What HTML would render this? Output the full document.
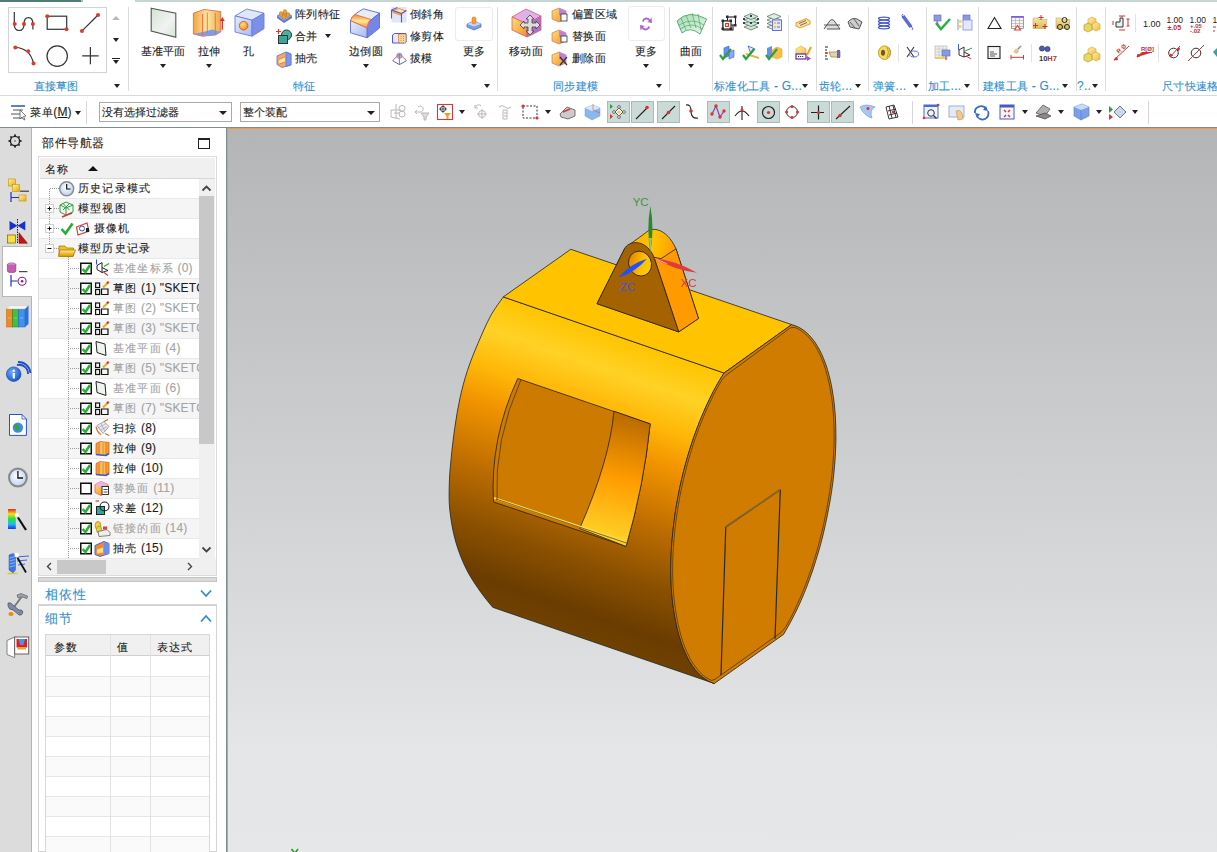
<!DOCTYPE html>
<html><head><meta charset="utf-8"><title>NX</title>
<style>
*{margin:0;padding:0;box-sizing:border-box}
html,body{width:1217px;height:852px;overflow:hidden;background:#fff;font-family:"Liberation Sans",sans-serif;font-size:12px;color:#1b1b1b}
.a{position:absolute}
.t{position:absolute;white-space:nowrap;line-height:14px;font-size:11px;letter-spacing:1.2px;-webkit-text-stroke:0.1px currentColor}
.c{transform:translateX(-50%)}
.lbl{color:#2e8fd0}
.g{color:#a3a3a3}
.l{font-size:12px;letter-spacing:0.2px}
</style></head><body>
<div class="a" style="left:0px;top:0px;width:81px;height:2px;background:#4f7d78"></div>
<div class="a" style="left:81px;top:0px;width:2px;height:2px;background:#a9c0bd"></div>
<div class="a" style="left:135px;top:0px;width:1082px;height:2px;background:#c5d5d3"></div>
<div class="a" style="left:0px;top:95px;width:1217px;height:1px;background:#d9d9d9"></div>
<div class="a" style="left:0px;top:127px;width:1217px;height:1px;background:#7f8b90"></div>
<div class="a" style="left:0px;top:128px;width:31px;height:724px;background:#dcdcdc"></div>
<div class="a" style="left:31px;top:128px;width:1px;height:724px;background:#b4b4b4"></div>
<div class="a" style="left:226px;top:128px;width:1px;height:724px;background:#7f8b90"></div>
<div class="a" style="left:227px;top:128px;width:990px;height:724px;background:#f39a3c"></div>
<div class="a" style="left:228px;top:129px;width:989px;height:723px;background:linear-gradient(#b4b5b7,#e5e6e8 87%,#e6e7e9)"></div>
<div class="a" style="left:8px;top:7px;width:99px;height:66px;border:1px solid #d3d3d3"></div>
<div class="a" style="left:112.0px;top:16.0px;width:0;height:0;border-left:4.0px solid transparent;border-right:4.0px solid transparent;border-top:4px solid transparent"></div>
<div class="a" style="left:112px;top:16px;width:0;height:0;border-left:4px solid transparent;border-right:4px solid transparent;border-bottom:4px solid #b9b9b9"></div>
<div class="a" style="left:112.5px;top:37.5px;width:0;height:0;border-left:3.5px solid transparent;border-right:3.5px solid transparent;border-top:4px solid #222"></div>
<div class="a" style="left:112px;top:58px;width:8px;height:1px;background:#222"></div>
<div class="a" style="left:112.5px;top:60.0px;width:0;height:0;border-left:3.5px solid transparent;border-right:3.5px solid transparent;border-top:4px solid #222"></div>
<div class="t c lbl" style="left:56.15px;top:79px;letter-spacing:0.3px;">直接草图</div>
<div class="a" style="left:114.0px;top:83.5px;width:0;height:0;border-left:3.5px solid transparent;border-right:3.5px solid transparent;border-top:4px solid #222"></div>
<div class="a" style="left:128px;top:7px;width:1px;height:84px;background:#dcdcdc"></div>
<div class="t c " style="left:163.15px;top:44px;letter-spacing:0.3px;">基准平面</div>
<div class="a" style="left:160.0px;top:63.5px;width:0;height:0;border-left:3.5px solid transparent;border-right:3.5px solid transparent;border-top:4px solid #222"></div>
<div class="t c " style="left:209.15px;top:44px;letter-spacing:0.3px;">拉伸</div>
<div class="a" style="left:206.0px;top:63.5px;width:0;height:0;border-left:3.5px solid transparent;border-right:3.5px solid transparent;border-top:4px solid #222"></div>
<div class="t c " style="left:249.15px;top:44px;letter-spacing:0.3px;">孔</div>
<div class="t " style="left:295px;top:7px;letter-spacing:0.3px;">阵列特征</div>
<div class="t " style="left:295px;top:29px;letter-spacing:0.3px;">合并</div>
<div class="a" style="left:325.0px;top:34.0px;width:0;height:0;border-left:3.5px solid transparent;border-right:3.5px solid transparent;border-top:4px solid #222"></div>
<div class="t " style="left:295px;top:51px;letter-spacing:0.3px;">抽壳</div>
<div class="t c " style="left:366.15px;top:44px;letter-spacing:0.3px;">边倒圆</div>
<div class="a" style="left:363.0px;top:63.5px;width:0;height:0;border-left:3.5px solid transparent;border-right:3.5px solid transparent;border-top:4px solid #222"></div>
<div class="t " style="left:410px;top:7px;letter-spacing:0.3px;">倒斜角</div>
<div class="t " style="left:410px;top:29px;letter-spacing:0.3px;">修剪体</div>
<div class="t " style="left:410px;top:51px;letter-spacing:0.3px;">拔模</div>
<div class="a" style="left:455px;top:7px;width:38px;height:34px;border:1px solid #ececec;border-radius:3px"></div>
<div class="t c " style="left:474.15px;top:44px;letter-spacing:0.3px;">更多</div>
<div class="a" style="left:471.0px;top:63.5px;width:0;height:0;border-left:3.5px solid transparent;border-right:3.5px solid transparent;border-top:4px solid #222"></div>
<div class="t c lbl" style="left:304.15px;top:79px;letter-spacing:0.3px;">特征</div>
<div class="a" style="left:483.5px;top:83.5px;width:0;height:0;border-left:3.5px solid transparent;border-right:3.5px solid transparent;border-top:4px solid #222"></div>
<div class="a" style="left:497px;top:7px;width:1px;height:84px;background:#dcdcdc"></div>
<div class="t c " style="left:526.15px;top:44px;letter-spacing:0.3px;">移动面</div>
<div class="t " style="left:572px;top:7px;letter-spacing:0.3px;">偏置区域</div>
<div class="t " style="left:572px;top:29px;letter-spacing:0.3px;">替换面</div>
<div class="t " style="left:572px;top:51px;letter-spacing:0.3px;">删除面</div>
<div class="a" style="left:628px;top:6px;width:37px;height:35px;border:1px solid #ececec;border-radius:3px"></div>
<div class="t c " style="left:646.15px;top:44px;letter-spacing:0.3px;">更多</div>
<div class="a" style="left:643.0px;top:63.5px;width:0;height:0;border-left:3.5px solid transparent;border-right:3.5px solid transparent;border-top:4px solid #222"></div>
<div class="t c lbl" style="left:575.65px;top:79px;letter-spacing:0.3px;">同步建模</div>
<div class="a" style="left:655.5px;top:83.5px;width:0;height:0;border-left:3.5px solid transparent;border-right:3.5px solid transparent;border-top:4px solid #222"></div>
<div class="a" style="left:669px;top:7px;width:1px;height:84px;background:#dcdcdc"></div>
<div class="t c " style="left:691.15px;top:44px;letter-spacing:0.3px;">曲面</div>
<div class="a" style="left:688.0px;top:63.5px;width:0;height:0;border-left:3.5px solid transparent;border-right:3.5px solid transparent;border-top:4px solid #222"></div>
<div class="a" style="left:712px;top:7px;width:1px;height:84px;background:#dcdcdc"></div>
<div class="t lbl" style="left:714px;top:79px;letter-spacing:0.3px;">标准化工具<span class="l"> - G</span><span style="letter-spacing:-0.6px"><span class="l">...</span></span></div>
<div class="a" style="left:802.0px;top:83.5px;width:0;height:0;border-left:3.5px solid transparent;border-right:3.5px solid transparent;border-top:4px solid #222"></div>
<div class="a" style="left:788px;top:15px;width:1px;height:47px;background:#e2e2e2"></div>
<div class="a" style="left:816px;top:7px;width:1px;height:84px;background:#dcdcdc"></div>
<div class="t lbl" style="left:819px;top:79px;letter-spacing:0.3px;">齿轮<span style="letter-spacing:-0.6px"><span class="l">...</span></span></div>
<div class="a" style="left:855.0px;top:83.5px;width:0;height:0;border-left:3.5px solid transparent;border-right:3.5px solid transparent;border-top:4px solid #222"></div>
<div class="a" style="left:868px;top:7px;width:1px;height:84px;background:#dcdcdc"></div>
<div class="t lbl" style="left:873px;top:79px;letter-spacing:0.3px;">弹簧<span style="letter-spacing:-0.6px"><span class="l">...</span></span></div>
<div class="a" style="left:912.5px;top:83.5px;width:0;height:0;border-left:3.5px solid transparent;border-right:3.5px solid transparent;border-top:4px solid #222"></div>
<div class="a" style="left:898px;top:44px;width:1px;height:18px;background:#e2e2e2"></div>
<div class="a" style="left:926px;top:7px;width:1px;height:84px;background:#dcdcdc"></div>
<div class="t lbl" style="left:928px;top:79px;letter-spacing:0.3px;">加工<span style="letter-spacing:-0.6px"><span class="l">...</span></span></div>
<div class="a" style="left:964.0px;top:83.5px;width:0;height:0;border-left:3.5px solid transparent;border-right:3.5px solid transparent;border-top:4px solid #222"></div>
<div class="a" style="left:978px;top:7px;width:1px;height:84px;background:#dcdcdc"></div>
<div class="t lbl" style="left:983px;top:79px;letter-spacing:0.3px;">建模工具<span class="l"> - G</span><span style="letter-spacing:-0.6px"><span class="l">...</span></span></div>
<div class="a" style="left:1062.0px;top:83.5px;width:0;height:0;border-left:3.5px solid transparent;border-right:3.5px solid transparent;border-top:4px solid #222"></div>
<div class="a" style="left:1031px;top:44px;width:1px;height:18px;background:#e2e2e2"></div>
<div class="a" style="left:1076px;top:7px;width:1px;height:84px;background:#dcdcdc"></div>
<div class="t lbl" style="left:1077px;top:79px;letter-spacing:0.3px;"><span class="l">?</span><span style="letter-spacing:-0.6px"><span class="l">..</span></span></div>
<div class="a" style="left:1091.5px;top:83.5px;width:0;height:0;border-left:3.5px solid transparent;border-right:3.5px solid transparent;border-top:4px solid #222"></div>
<div class="a" style="left:1105px;top:7px;width:1px;height:84px;background:#dcdcdc"></div>
<div class="t lbl" style="left:1162px;top:79px;letter-spacing:0.3px;">尺寸快速格</div>
<div class="a" style="left:1135px;top:14px;width:1px;height:18px;background:#e2e2e2"></div>
<div class="a" style="left:1158px;top:44px;width:1px;height:18px;background:#e2e2e2"></div>
<div class="t " style="left:30px;top:105px;letter-spacing:0.6px">菜单<span class="l">(</span><u><span class="l">M</span></u><span class="l">)</span></div>
<div class="a" style="left:75.0px;top:110.5px;width:0;height:0;border-left:3.5px solid transparent;border-right:3.5px solid transparent;border-top:4px solid #222"></div>
<div class="a" style="left:86px;top:101px;width:1px;height:23px;background:#d6d6d6"></div>
<div class="a" style="left:99px;top:102px;width:133px;height:20px;border:1px solid #a9a9a9;background:#fff"></div>
<div class="t " style="left:102px;top:105px;letter-spacing:0">没有选择过滤器</div>
<div class="a" style="left:219.0px;top:111.0px;width:0;height:0;border-left:4.0px solid transparent;border-right:4.0px solid transparent;border-top:4px solid #222"></div>
<div class="a" style="left:240px;top:102px;width:140px;height:20px;border:1px solid #a9a9a9;background:#fff"></div>
<div class="t " style="left:243px;top:105px;letter-spacing:0">整个装配</div>
<div class="a" style="left:367.0px;top:111.0px;width:0;height:0;border-left:4.0px solid transparent;border-right:4.0px solid transparent;border-top:4px solid #222"></div>
<div class="a" style="left:459.0px;top:110.0px;width:0;height:0;border-left:3.5px solid transparent;border-right:3.5px solid transparent;border-top:4px solid #222"></div>
<div class="a" style="left:544.5px;top:110.0px;width:0;height:0;border-left:3.5px solid transparent;border-right:3.5px solid transparent;border-top:4px solid #222"></div>
<div class="a" style="left:1022.0px;top:110.0px;width:0;height:0;border-left:3.5px solid transparent;border-right:3.5px solid transparent;border-top:4px solid #222"></div>
<div class="a" style="left:1058.0px;top:110.0px;width:0;height:0;border-left:3.5px solid transparent;border-right:3.5px solid transparent;border-top:4px solid #222"></div>
<div class="a" style="left:1095.5px;top:110.0px;width:0;height:0;border-left:3.5px solid transparent;border-right:3.5px solid transparent;border-top:4px solid #222"></div>
<div class="a" style="left:1131.5px;top:110.0px;width:0;height:0;border-left:3.5px solid transparent;border-right:3.5px solid transparent;border-top:4px solid #222"></div>
<div class="a" style="left:607px;top:101px;width:23px;height:22px;background:#c9dad7;border:1px solid #a7bdb9"></div>
<div class="a" style="left:631px;top:101px;width:23px;height:22px;background:#c9dad7;border:1px solid #a7bdb9"></div>
<div class="a" style="left:657px;top:101px;width:23px;height:22px;background:#c9dad7;border:1px solid #a7bdb9"></div>
<div class="a" style="left:707px;top:101px;width:23px;height:22px;background:#c9dad7;border:1px solid #a7bdb9"></div>
<div class="a" style="left:757px;top:101px;width:23px;height:22px;background:#c9dad7;border:1px solid #a7bdb9"></div>
<div class="a" style="left:807px;top:101px;width:23px;height:22px;background:#c9dad7;border:1px solid #a7bdb9"></div>
<div class="a" style="left:831px;top:101px;width:23px;height:22px;background:#c9dad7;border:1px solid #a7bdb9"></div>
<div class="a" style="left:912px;top:101px;width:1px;height:23px;background:#d6d6d6"></div>
<div class="a" style="left:1148px;top:101px;width:1px;height:23px;background:#d6d6d6"></div>
<div class="t " style="left:42px;top:135.5px;font-size:12px;letter-spacing:0.5px">部件导航器</div>
<div class="a" style="left:198px;top:138px;width:12px;height:11px;border:1.5px solid #222;border-top-width:2.5px"></div>
<div class="a" style="left:38px;top:156px;width:179px;height:420px;border:1px solid #dcdcdc"></div>
<div class="a" style="left:39px;top:157px;width:177px;height:418px;border:1px solid #fff"></div>
<div class="a" style="left:40px;top:158px;width:175px;height:20px;background:#f0f0f0"></div>
<div class="a" style="left:40px;top:178px;width:175px;height:1px;background:#d8d8d8"></div>
<div class="t " style="left:45px;top:162px;">名称</div>
<div class="a" style="left:88px;top:166px;width:0;height:0;border-left:5px solid transparent;border-right:5px solid transparent;border-bottom:5px solid #111"></div>
<div class="a" style="left:39px;top:179px;width:160px;height:380px;overflow:hidden">
<div class="a" style="left:0;top:0px;width:160px;height:20px;background:#fff;border-bottom:1px solid #e9e9e9"></div>
<div class="t" style="left:39px;top:2px;color:#1b1b1b">历史记录模式</div>
<div class="a" style="left:0;top:20px;width:160px;height:20px;background:#f5f5f5;border-bottom:1px solid #e9e9e9"></div>
<div class="t" style="left:39px;top:22px;color:#1b1b1b">模型视图</div>
<div class="a" style="left:0;top:40px;width:160px;height:20px;background:#fff;border-bottom:1px solid #e9e9e9"></div>
<div class="t" style="left:55px;top:42px;color:#1b1b1b">摄像机</div>
<div class="a" style="left:0;top:60px;width:160px;height:20px;background:#f5f5f5;border-bottom:1px solid #e9e9e9"></div>
<div class="t" style="left:39px;top:62px;color:#1b1b1b">模型历史记录</div>
<div class="a" style="left:0;top:80px;width:160px;height:20px;background:#fff;border-bottom:1px solid #e9e9e9"></div>
<div class="t" style="left:74px;top:82px;color:#a3a3a3">基准坐标系<span class="l"> (0)</span></div>
<div class="a" style="left:0;top:100px;width:160px;height:20px;background:#f5f5f5;border-bottom:1px solid #e9e9e9"></div>
<div class="t" style="left:74px;top:102px;color:#1b1b1b">草图<span class="l"> (1) "SKETCH_000"</span></div>
<div class="a" style="left:0;top:120px;width:160px;height:20px;background:#fff;border-bottom:1px solid #e9e9e9"></div>
<div class="t" style="left:74px;top:122px;color:#a3a3a3">草图<span class="l"> (2) "SKETCH_001"</span></div>
<div class="a" style="left:0;top:140px;width:160px;height:20px;background:#f5f5f5;border-bottom:1px solid #e9e9e9"></div>
<div class="t" style="left:74px;top:142px;color:#a3a3a3">草图<span class="l"> (3) "SKETCH_002"</span></div>
<div class="a" style="left:0;top:160px;width:160px;height:20px;background:#fff;border-bottom:1px solid #e9e9e9"></div>
<div class="t" style="left:74px;top:162px;color:#a3a3a3">基准平面<span class="l"> (4)</span></div>
<div class="a" style="left:0;top:180px;width:160px;height:20px;background:#f5f5f5;border-bottom:1px solid #e9e9e9"></div>
<div class="t" style="left:74px;top:182px;color:#a3a3a3">草图<span class="l"> (5) "SKETCH_003"</span></div>
<div class="a" style="left:0;top:200px;width:160px;height:20px;background:#fff;border-bottom:1px solid #e9e9e9"></div>
<div class="t" style="left:74px;top:202px;color:#a3a3a3">基准平面<span class="l"> (6)</span></div>
<div class="a" style="left:0;top:220px;width:160px;height:20px;background:#f5f5f5;border-bottom:1px solid #e9e9e9"></div>
<div class="t" style="left:74px;top:222px;color:#a3a3a3">草图<span class="l"> (7) "SKETCH_004"</span></div>
<div class="a" style="left:0;top:240px;width:160px;height:20px;background:#fff;border-bottom:1px solid #e9e9e9"></div>
<div class="t" style="left:74px;top:242px;color:#1b1b1b">扫掠<span class="l"> (8)</span></div>
<div class="a" style="left:0;top:260px;width:160px;height:20px;background:#f5f5f5;border-bottom:1px solid #e9e9e9"></div>
<div class="t" style="left:74px;top:262px;color:#1b1b1b">拉伸<span class="l"> (9)</span></div>
<div class="a" style="left:0;top:280px;width:160px;height:20px;background:#fff;border-bottom:1px solid #e9e9e9"></div>
<div class="t" style="left:74px;top:282px;color:#1b1b1b">拉伸<span class="l"> (10)</span></div>
<div class="a" style="left:0;top:300px;width:160px;height:20px;background:#f5f5f5;border-bottom:1px solid #e9e9e9"></div>
<div class="t" style="left:74px;top:302px;color:#a3a3a3">替换面<span class="l"> (11)</span></div>
<div class="a" style="left:0;top:320px;width:160px;height:20px;background:#fff;border-bottom:1px solid #e9e9e9"></div>
<div class="t" style="left:74px;top:322px;color:#1b1b1b">求差<span class="l"> (12)</span></div>
<div class="a" style="left:0;top:340px;width:160px;height:20px;background:#f5f5f5;border-bottom:1px solid #e9e9e9"></div>
<div class="t" style="left:74px;top:342px;color:#a3a3a3">链接的面<span class="l"> (14)</span></div>
<div class="a" style="left:0;top:360px;width:160px;height:20px;background:#fff;border-bottom:1px solid #e9e9e9"></div>
<div class="t" style="left:74px;top:362px;color:#1b1b1b">抽壳<span class="l"> (15)</span></div>
</div>
<div class="a" style="left:199px;top:179px;width:16px;height:380px;background:#f0f0f0"></div>
<div class="a" style="left:199px;top:196px;width:15px;height:248px;background:#c8c8c8"></div>
<div class="a" style="left:39px;top:559px;width:177px;height:16px;background:#f0f0f0"></div>
<div class="a" style="left:57px;top:560px;width:49px;height:14px;background:#c8c8c8"></div>
<div class="a" style="left:38px;top:577px;width:179px;height:5px;background:#d9d9d9;border:1px solid #c4c4c4"></div>
<div class="t lbl" style="left:45px;top:588px;font-size:13px">相依性</div>
<div class="a" style="left:38px;top:604px;width:179px;height:248px;border:1px solid #d4d4d4;border-top:2px solid #d4d4d4"></div>
<div class="t lbl" style="left:45px;top:612px;font-size:13px">细节</div>
<div class="a" style="left:45px;top:634px;width:165px;height:218px;border:1px solid #d8d8d8"></div>
<div class="a" style="left:46px;top:635px;width:163px;height:21px;background:#f0f0f0;border-bottom:1px solid #d0d0d0"></div>
<div class="a" style="left:110px;top:635px;width:1px;height:217px;background:#e2e2e2"></div>
<div class="a" style="left:150px;top:635px;width:1px;height:217px;background:#e2e2e2"></div>
<div class="t " style="left:54px;top:640px;">参数</div>
<div class="t " style="left:117px;top:640px;">值</div>
<div class="t " style="left:157px;top:640px;">表达式</div>
<div class="a" style="left:46px;top:676px;width:163px;height:1px;background:#e6e6e6"></div>
<div class="a" style="left:46px;top:677px;width:163px;height:19px;background:#fafafa"></div>
<div class="a" style="left:46px;top:696px;width:163px;height:1px;background:#e6e6e6"></div>
<div class="a" style="left:46px;top:716px;width:163px;height:1px;background:#e6e6e6"></div>
<div class="a" style="left:46px;top:717px;width:163px;height:19px;background:#fafafa"></div>
<div class="a" style="left:46px;top:736px;width:163px;height:1px;background:#e6e6e6"></div>
<div class="a" style="left:46px;top:756px;width:163px;height:1px;background:#e6e6e6"></div>
<div class="a" style="left:46px;top:757px;width:163px;height:19px;background:#fafafa"></div>
<div class="a" style="left:46px;top:776px;width:163px;height:1px;background:#e6e6e6"></div>
<div class="a" style="left:46px;top:796px;width:163px;height:1px;background:#e6e6e6"></div>
<div class="a" style="left:46px;top:797px;width:163px;height:19px;background:#fafafa"></div>
<div class="a" style="left:46px;top:816px;width:163px;height:1px;background:#e6e6e6"></div>
<div class="a" style="left:46px;top:836px;width:163px;height:1px;background:#e6e6e6"></div>
<div class="a" style="left:46px;top:837px;width:163px;height:19px;background:#fafafa"></div>
<div class="a" style="left:46px;top:856px;width:163px;height:1px;background:#e6e6e6"></div>
<div class="a" style="left:110px;top:656px;width:1px;height:196px;background:#e2e2e2"></div>
<div class="a" style="left:150px;top:656px;width:1px;height:196px;background:#e2e2e2"></div>
<svg class="a" style="left:0;top:0" width="1217" height="128" viewBox="0 0 1217 128">
<defs>
<linearGradient id="gplane" x1="0" y1="0" x2="1" y2="1"><stop offset="0" stop-color="#d3e3d3"/><stop offset="0.6" stop-color="#f2f2f2"/><stop offset="1" stop-color="#d2e6d2"/></linearGradient>
<linearGradient id="gorange" x1="0" y1="0" x2="1" y2="0"><stop offset="0" stop-color="#f2a640"/><stop offset="0.5" stop-color="#fde6a0"/><stop offset="1" stop-color="#f0a848"/></linearGradient>
<linearGradient id="gblue" x1="0" y1="0" x2="1" y2="1"><stop offset="0" stop-color="#e6eefa"/><stop offset="1" stop-color="#a9b9ee"/></linearGradient>
<linearGradient id="gband" x1="0" y1="0" x2="0" y2="1"><stop offset="0" stop-color="#f08848"/><stop offset="0.5" stop-color="#fde890"/><stop offset="1" stop-color="#f09040"/></linearGradient>
<radialGradient id="gball" cx="0.4" cy="0.35" r="0.7"><stop offset="0" stop-color="#ffe070"/><stop offset="1" stop-color="#f08a20"/></radialGradient>
<linearGradient id="gpurp" x1="0" y1="0" x2="1" y2="1"><stop offset="0" stop-color="#f7d0f7"/><stop offset="1" stop-color="#b070d8"/></linearGradient>
<linearGradient id="gyel" x1="0" y1="0" x2="1" y2="1"><stop offset="0" stop-color="#ffe070"/><stop offset="1" stop-color="#f09030"/></linearGradient>
<linearGradient id="gsurf" x1="0" y1="0" x2="1" y2="1"><stop offset="0" stop-color="#a8dcb0"/><stop offset="1" stop-color="#e8f4ea"/></linearGradient>
</defs>
<!-- ===== group1 sketch icons ===== -->
<g fill="none" stroke="#333" stroke-width="1.2">
 <path d="M14.3,12 V24 Q14.3,30.5 19.2,30.5 Q24,30.5 24,24 Q24,17.6 28.5,17.6 Q32.9,17.6 32.9,24 V29.5"/>
 <rect x="47.2" y="16.2" width="19.5" height="13.1"/>
 <path d="M81.8,31.1 L98,15"/>
 <path d="M15.3,47.5 Q30,48 33.5,63.4"/>
 <circle cx="57.2" cy="56.1" r="10.2"/>
 <path d="M82.2,55.8 H98.6 M90.4,47 V64.3"/>
</g>
<g fill="#e03a2a">
 <circle cx="14.7" cy="24" r="2"/><circle cx="24" cy="24" r="2"/><circle cx="32.9" cy="24" r="2"/>
 <circle cx="47.3" cy="16.3" r="2"/><circle cx="66.5" cy="29.2" r="2"/>
 <circle cx="81.9" cy="31" r="2"/><circle cx="98" cy="15" r="2"/>
 <circle cx="15.3" cy="47.6" r="2"/><circle cx="28.2" cy="51.3" r="2"/><circle cx="33.5" cy="63.4" r="2"/>
</g>
<!-- ===== group2 ===== -->
<path d="M151.2,8.2 L175.8,13.2 L175.8,37.3 L151.2,31 Z" fill="url(#gplane)" stroke="#555" stroke-width="1.1"/>
<g stroke="#e86a50" stroke-width="0.9">
 <path d="M193.4,13.2 L204,9.5 L220.7,11.6 L220.7,32 L215.3,35 L202.5,36.2 L193.4,34 Z" fill="url(#gorange)"/>
 <path d="M193.4,34 L202.5,36.2 L215.3,35 L220.7,32 L212,29.5 L205,31.5 Z" fill="#7c9ce8" stroke="none"/>
 <path d="M202.5,14 V36 M207.3,12.5 V33 M215.3,13 V35" fill="none"/>
 <path d="M222.3,29.8 V19" stroke="#e03030" stroke-width="1.3"/>
</g>
<path d="M219.8,21 L222.3,17 L224.8,21 Z" fill="#e03030"/>
<g stroke="#6c7cdc" stroke-width="0.9">
 <path d="M235,15.9 L246.8,9 L264,13.2 L252,20.2 Z" fill="#dfe8f8"/>
 <path d="M235,15.9 L252,20.2 L252,36.2 L235,32 Z" fill="url(#gblue)"/>
 <path d="M252,20.2 L264,13.2 L264,28.7 L252,36.2 Z" fill="#7d90e8"/>
</g>
<circle cx="243.6" cy="25.7" r="4.3" fill="url(#gball)" stroke="#e84a3a" stroke-width="0.9"/>
<!-- small: 阵列特征 -->
<path d="M277,16 L285,12 L292,16 L284,21 Z" fill="#8fb0f0" stroke="#5a78d8" stroke-width="0.8"/>
<path d="M277,16 L277,18 L284,23 L292,18 L292,16 L284,21 Z" fill="#5a78d8"/>
<g fill="#f0a030" stroke="#c06a10" stroke-width="0.5"><ellipse cx="281" cy="14" rx="1.8" ry="2.5"/><ellipse cx="285" cy="12" rx="1.8" ry="2.5"/><ellipse cx="284" cy="17" rx="1.8" ry="2.5"/><ellipse cx="288" cy="15" rx="1.8" ry="2.5"/></g>
<!-- 合并 -->
<path d="M276,31.5 H281 M278.5,29 V34" stroke="#e03030" stroke-width="1.1"/>
<circle cx="286.5" cy="35" r="5" fill="#4db0a0" stroke="#333" stroke-width="1"/>
<rect x="278.5" y="35.5" width="9" height="8" fill="#3aa898" stroke="#333" stroke-width="1"/>
<!-- 抽壳 -->
<path d="M277,56 L286,52 L291,54 L291,65 L282,67.5 L277,64.5 Z" fill="#f5a860" stroke="#5a70d0" stroke-width="0.8"/>
<path d="M286,52 L291,54 L291,65 L286,66.5 Z" fill="#7c96ea" stroke="#5a70d0" stroke-width="0.6"/>
<path d="M279,59.5 L285,57 L285,62 L279,64 Z" fill="#fde8a8"/>
<path d="M279,59.5 L285,57 M279,64 L285,62" stroke="#e86a30" stroke-width="0.7"/>
<!-- 边倒圆 -->
<g stroke="#5a6cd8" stroke-width="0.9">
 <path d="M350.5,20.5 Q352,15 363.5,8.8 L379.5,13.1 L367.2,23 Z" fill="#e8ecf4"/>
 <path d="M350.5,20.5 L367.2,27.9 L367.2,37.8 L350.5,32.8 Z" fill="url(#gblue)"/>
 <path d="M367.2,23 L379.5,13.1 L379.5,28 L367.2,37.8 Z" fill="#7686e8"/>
 <path d="M350.5,20.5 Q352,16 355,14.5 L371,19.5 Q368,21 367.2,27.9 Z" fill="url(#gband)" stroke="#f06a40"/>
</g>
<!-- 倒斜角 -->
<rect x="391.5" y="7" width="15" height="15.5" fill="#dfe6f6"/>
<path d="M392.5,11 L399,8.5 L406,11 L401.5,14 Z" fill="#fde8a0" stroke="#f07040" stroke-width="0.8"/>
<path d="M392.5,11 L401.5,14 L401.5,16 L392.5,13 Z" fill="#f5a050"/>
<path d="M391.5,18.5 V10 L397.5,7.5 M391.5,10 L401.5,13.5 L406.5,10.5 M401.5,13.5 V22.5" fill="none" stroke="#4a5ad8" stroke-width="1.1"/>
<!-- 修剪体 -->
<path d="M392.5,35 L394.5,33.5 H406 V42 L404,43 H392.5 Z" fill="#e4eaf8" stroke="#4a5ad8" stroke-width="1"/>
<rect x="398.5" y="34" width="7.5" height="8.8" fill="#f8dc90" stroke="#e04a40" stroke-width="0.9" stroke-dasharray="1.2,0.8"/>
<path d="M401,36 v6 M403.5,36 v6" stroke="#e04a40" stroke-width="0.6" stroke-dasharray="1,1"/>
<!-- 拔模 -->
<path d="M392.6,60.7 L399.4,64.6 L406.5,60.7" fill="none" stroke="#4a68d8" stroke-width="1"/>
<circle cx="399.4" cy="55.8" r="2.8" fill="#9ab8f0" stroke="#6a88e0" stroke-width="0.5"/>
<path d="M392.6,60.7 L399.4,53.9 L406.5,60.7 M399.4,54 V65" fill="none" stroke="#f05a40" stroke-width="1"/>
<!-- 更多 icon -->
<path d="M467,24 L474,21 L481,24 L481,27 L474,30 L467,27 Z" fill="#7c9ce8" stroke="#4a68d0" stroke-width="0.7"/>
<path d="M467,24 L474,21 L481,24 L474,26.5 Z" fill="#c6d6f8"/>
<rect x="472" y="17" width="4" height="7" rx="1.5" fill="#f89a30" stroke="#e07010" stroke-width="0.5"/>
<!-- ===== group3 ===== -->
<g stroke="#d06070" stroke-width="0.8">
 <path d="M512,17 L526,9 L541,16 L527,24 Z" fill="#e0b0e8"/>
 <path d="M512,17 L527,24 L527,37 L512,30 Z" fill="url(#gyel)"/>
 <path d="M527,24 L541,16 L541,30 L527,37 Z" fill="#b070d0"/>
</g>
<path d="M530,15 L534,19 H532 V23 H536 V21 L540,25 L536,29 V27 H532 V31 H534 L530,35 L526,31 H528 V27 H524 V29 L520,25 L524,21 V23 H528 V19 H526 Z" fill="#ddd" stroke="#444" stroke-width="0.8"/>
<g stroke="#c06080" stroke-width="0.6">
 <path d="M552,11 L559,8 L566,11 L566,19 L559,22 L552,19 Z" fill="url(#gyel)"/>
 <path d="M552,33 L559,30 L566,33 L566,41 L559,44 L552,41 Z" fill="url(#gyel)"/>
 <path d="M552,55 L559,52 L566,55 L566,63 L559,66 L552,63 Z" fill="url(#gyel)"/>
</g>
<path d="M559,8 L566,11 L566,19 L559,15 Z M559,30 L566,33 L566,41 L559,37 Z M559,52 L566,55 L566,63 L559,59 Z" fill="#c080d8"/>
<rect x="561" y="14" width="6" height="7" fill="#fff" stroke="#333" stroke-width="0.8"/>
<rect x="561" y="36" width="6" height="6" fill="#fff" stroke="#333" stroke-width="0.8"/>
<path d="M560,57 L567,65 M567,57 L560,65" stroke="#333" stroke-width="1.2"/>
<!-- 更多 sync icon -->
<path d="M642,21 A4.5,4.5 0 0 1 650,19.5 L651.5,17.5 L652,23 L647,22 L649,21 A3,3 0 0 0 643.5,22 Z" fill="#b060d0"/>
<path d="M650,27 A4.5,4.5 0 0 1 642,28.5 L640.5,30.5 L640,25 L645,26 L643,27 A3,3 0 0 0 648.5,26 Z" fill="#b060d0"/>
<!-- 曲面 -->
<path d="M677,21 Q688,9 706.6,19 L700,34 Q690,26 682,33 Z" fill="url(#gsurf)" stroke="#3aa060" stroke-width="0.8"/>
<path d="M681,18 L686,30 M686,15 L691,28 M692,13 L696,28 M698,14 L701,30 M679,25 Q692,17 704,25 M680,29 Q692,21 702,29" fill="none" stroke="#3aa060" stroke-width="0.6"/>
</svg>

<svg class="a" style="left:0;top:0" width="1217" height="128" viewBox="0 0 1217 128">
<defs>
<linearGradient id="gfold" x1="0" y1="0" x2="0" y2="1"><stop offset="0" stop-color="#f6e6a8"/><stop offset="1" stop-color="#d8b850"/></linearGradient>
<linearGradient id="gcube" x1="0" y1="0" x2="1" y2="1"><stop offset="0" stop-color="#fff2b0"/><stop offset="1" stop-color="#f2b838"/></linearGradient>
</defs>
<!-- 标准化工具 row1 -->
<g stroke="#222" stroke-width="1.1" fill="none"><rect x="723" y="21" width="10" height="9"/><rect x="727.5" y="17" width="8" height="8" fill="#fff"/><rect x="723" y="21" width="8" height="8" fill="#fff"/></g>
<rect x="725.5" y="23.5" width="3" height="3" fill="#f7e070" stroke="#e83030" stroke-width="1"/>
<g fill="#2a2a3a"><rect x="721.5" y="19.5" width="2.5" height="2.5"/><rect x="729.5" y="19.5" width="2.5" height="2.5"/><rect x="721.5" y="27.5" width="2.5" height="2.5"/><rect x="729.5" y="27.5" width="2.5" height="2.5"/><rect x="726" y="15.5" width="2.5" height="2.5"/><rect x="734" y="15.5" width="2.5" height="2.5"/><rect x="734" y="24" width="2.5" height="2.5"/></g>
<g fill="#cfe8d6" stroke="#4a6a58" stroke-width="0.7"><path d="M744,27 L751,24 L758,27 L751,30 Z"/><path d="M744,23.5 L751,20.5 L758,23.5 L751,26.5 Z"/><path d="M744,20 L751,17 L758,20 L751,23 Z"/><path d="M744,16.5 L751,13.5 L758,16.5 L751,19.5 Z"/></g>
<g fill="#3a3a6a"><rect x="743" y="18" width="2" height="2"/><rect x="750" y="15" width="2" height="2"/><rect x="757" y="18" width="2" height="2"/><rect x="743" y="22" width="2" height="2"/><rect x="750" y="22" width="2" height="2"/><rect x="757" y="22" width="2" height="2"/></g>
<g fill="#dfeee4" stroke="#4a6a58" stroke-width="0.7"><path d="M767,27 L774,24 L781,27 L774,30 Z"/><path d="M767,23.5 L774,20.5 L781,23.5 L774,26.5 Z"/><path d="M767,20 L774,17 L781,20 L774,23 Z"/><path d="M767,16.5 L774,13.5 L781,16.5 L774,19.5 Z"/></g>
<rect x="772.5" y="20" width="9" height="10.5" fill="#e4e8fa" stroke="#6c70e0" stroke-width="1"/>
<path d="M774,23 h2 M774,27 h2" stroke="#e0c020" stroke-width="1.5"/><path d="M777,23 h3 M777,27 h3" stroke="#555" stroke-width="0.8"/>
<path d="M796,23 L806,18.5 L810,21 L810,24 L800,28 L796,26 Z" fill="#fbe0a0" stroke="#f0a030" stroke-width="1.1"/>
<path d="M799,23.5 L806,20.5 M800,25.5 L807,22.5" stroke="#555" stroke-width="0.8"/>
<!-- row2 -->
<g stroke="#3a5ad0" stroke-width="0.6"><path d="M724,48 L729,46 L729,56 L724,58 Z" fill="#6a8ef0"/><path d="M729,52 L734,50 L734,57 L729,59 Z" fill="#8aaaf8"/></g>
<path d="M720,55 L723,59 L731,49" fill="none" stroke="#2aa040" stroke-width="2.2"/>
<path d="M748,46 L755,49 L751,54 Z" fill="#e8ecfa" stroke="#3a5ad0" stroke-width="0.8"/>
<path d="M746,54 L759,58" stroke="#d8b848" stroke-width="2.2"/>
<path d="M743,55 L746,59 L754,49" fill="none" stroke="#2aa040" stroke-width="2.2"/>
<path d="M767,48 L772,46 L772,56 L767,58 Z" fill="#6a8ef0"/>
<path d="M772,50 L777,47 L782,49 L782,57 L777,59 L772,57 Z" fill="#f8c040" stroke="#f0a030" stroke-width="0.6"/>
<path d="M766,55 L769,59 L777,49" fill="none" stroke="#2aa040" stroke-width="2.2"/>
<path d="M796,49 L801,46 L806,49 L806,54 L801,56 L796,54 Z" fill="url(#gcube)" stroke="#e8a030" stroke-width="0.6"/>
<rect x="796" y="54" width="10" height="5" fill="#fff" stroke="#5a2aa0" stroke-width="1.2"/>
<path d="M798,56.5 h6" stroke="#333" stroke-width="1" stroke-dasharray="1.2,0.8"/>
<path d="M807,55 L811,47" stroke="#f0a020" stroke-width="2"/>
<path d="M807,56 L807,61 L811,58.5 Z" fill="#c040c0"/>
<!-- 齿轮 -->
<path d="M824,29 L829,22 Q832,17 835,22 L840,29 M824,25 h16 M827,29 h13" fill="#ddd" stroke="#444" stroke-width="0.9"/>
<path d="M848,22 Q852,17 857,19 L862,22 L859,29 Q854,28 850,27 Z" fill="#ccc" stroke="#444" stroke-width="0.9"/>
<path d="M850,22 L855,28 M854,19 L859,26" stroke="#444" stroke-width="0.8"/>
<path d="M825,47 h3 M825,50 h2 M825,53 h3 M825,56 h2 M825,59 h3" stroke="#222" stroke-width="1"/>
<circle cx="826" cy="53" r="1" fill="#e03030"/>
<path d="M829,52 L836,52 L838,50 L840,51 L840,57 L831,57 Z" fill="#e8d0a8" stroke="#9a7a50" stroke-width="0.7"/>
<rect x="837" y="50" width="3" height="8" fill="#5a6ad0"/>
<!-- 弹簧 -->
<g stroke="#4a5ad0" stroke-width="1.3" fill="none"><ellipse cx="884" cy="18.5" rx="5.5" ry="1.3"/><ellipse cx="884" cy="21.5" rx="5.5" ry="1.3"/><ellipse cx="884" cy="24.5" rx="5.5" ry="1.3"/><ellipse cx="884" cy="27.5" rx="5.5" ry="1.3"/></g>
<path d="M903,16 L911,27" stroke="#5a6ad8" stroke-width="3.5"/>
<path d="M903,18 Q901,15 903,14 M911,26 Q914,29 912,30" stroke="#4a5ad0" stroke-width="1" fill="none"/>
<ellipse cx="884.5" cy="52.7" rx="6" ry="6.8" fill="#f8d860" stroke="#c8a020" stroke-width="1"/>
<ellipse cx="883" cy="52.7" rx="2" ry="3" fill="#6a5a20"/>
<path d="M887,47 Q890,52 887,58 M889,47.5 Q892,52 889,57.5" stroke="#b89020" stroke-width="0.8" fill="none"/>
<path d="M907,47 L914,57 M914,47 L907,57" stroke="#333" stroke-width="1.1"/>
<ellipse cx="914" cy="54" rx="4.5" ry="3" fill="none" stroke="#6a7ad8" stroke-width="1"/>
<!-- 加工 -->
<rect x="934" y="15" width="7" height="6" fill="#8a9ae0" stroke="#5a6ac0" stroke-width="0.6"/>
<path d="M937,21 L938,25" stroke="#c060c0" stroke-width="1.5"/>
<path d="M936,23 L941,29 L950,19" fill="none" stroke="#2ab040" stroke-width="2.5"/>
<rect x="963" y="15" width="7" height="6" fill="#8a9ae0" stroke="#5a6ac0" stroke-width="0.6"/>
<rect x="963" y="20" width="9" height="10" fill="#e4e8fa" stroke="#8a90d8" stroke-width="0.8"/>
<path d="M958,19 V30" stroke="#6a70d0" stroke-width="0.8"/><rect x="958.5" y="20" width="3" height="3" fill="#e8d880"/><rect x="958.5" y="25" width="3" height="3" fill="#e8d880"/>
<rect x="935" y="46" width="12" height="12" fill="#f0f0e8" stroke="#aaa" stroke-width="0.6"/>
<path d="M935,49 h12 M935,52 h12 M935,55 h12 M939,46 v12 M943,46 v12" stroke="#bbb" stroke-width="0.5"/>
<rect x="935" y="57" width="12" height="1.8" fill="#e8d040"/>
<rect x="942" y="50" width="8" height="6" fill="#8a9ae0" stroke="#5a6ac0" stroke-width="0.6"/>
<path d="M946,56 V60" stroke="#c060c0" stroke-width="1.5"/>
<path d="M959,50 L964,47 L964,57 L959,55 Z M964,52 L970,55 L964,57" fill="none" stroke="#333" stroke-width="1"/>
<path d="M958.5,44 V50" stroke="#2a4ae0" stroke-width="0.9"/><path d="M965,51 L972,48" stroke="#2aa040" stroke-width="1"/><path d="M966,56 L971,59" stroke="#e03030" stroke-width="1"/>
<!-- 建模工具 -->
<path d="M988,28.5 L994.5,17.5 L1001,28.5 Z" fill="none" stroke="#222" stroke-width="1.1"/>
<rect x="1011.5" y="16.5" width="12" height="12" fill="#f4f4f4" stroke="#777" stroke-width="0.7"/>
<rect x="1011.5" y="16" width="12" height="1.8" fill="#7a5ae0"/>
<path d="M1011.5,20.5 h12 M1011.5,23.5 h12 M1011.5,26.5 h12 M1015.5,17 v12 M1019.5,17 v12" stroke="#999" stroke-width="0.5"/>
<path d="M1014.5,30 L1017.5,25.5 L1020.5,30 Z" fill="#fff" stroke="#e03a3a" stroke-width="1.1"/>
<path d="M1033,18 h5 l1,1.5 h8 l-1.5,9 h-12.5 Z" fill="url(#gfold)" stroke="#c8a850" stroke-width="0.6"/>
<path d="M1041,15 v5 M1038.5,17.5 h5 M1035.5,23 v5 M1033,25.5 h5 M1045,24 v5 M1042.5,26.5 h5" stroke="#e02a2a" stroke-width="1"/>
<path d="M1056,18 h5 l1,1.5 h8 l-1.5,9 h-12.5 Z" fill="url(#gfold)" stroke="#c8a850" stroke-width="0.6"/>
<g fill="none" stroke="#222" stroke-width="1"><circle cx="1064.5" cy="20" r="2.5"/><circle cx="1060" cy="27" r="2.5"/><circle cx="1067" cy="27" r="2.5"/></g>
<rect x="988" y="46.5" width="12" height="12" fill="#f4f4f4" stroke="#222" stroke-width="1.1"/>
<path d="M990,52 h4 M990,54 h7 M990,56 h5" stroke="#333" stroke-width="0.8"/>
<path d="M1011,55 v4.5 M1023.5,55 v4.5 M1011,57.3 h12.5" stroke="#c83a3a" stroke-width="1"/>
<path d="M1013,52 L1016,48.5 L1019,51 L1017,54 Z" fill="#e0c880"/><path d="M1017.5,49.5 L1021,46" stroke="#7a8ad0" stroke-width="1.5"/>
<circle cx="1042" cy="48.5" r="2.6" fill="#4a5ac0" stroke="#333" stroke-width="0.6"/><circle cx="1047.5" cy="49" r="2.6" fill="#4a5ac0" stroke="#333" stroke-width="0.6"/>
<text x="1039" y="60.5" font-size="7.5" font-weight="bold" font-family="Liberation Sans" fill="#333">10<tspan fill="#b03030">H7</tspan></text>
<!-- ?.. cubes -->
<g stroke="#e0a030" stroke-width="0.6">
<path d="M1088,19 L1092,17 L1096,19 L1096,24 L1092,26 L1088,24 Z" fill="url(#gcube)"/>
<path d="M1092,24 L1096,22 L1100,24 L1100,29 L1096,31 L1092,29 Z" fill="url(#gcube)"/>
<path d="M1084,25 L1088,23 L1092,25 L1092,30 L1088,32 L1084,30 Z" fill="#e8d860" stroke="#a09030"/>
<path d="M1088,49 L1092,47 L1096,49 L1096,54 L1092,56 L1088,54 Z" fill="url(#gcube)"/>
<path d="M1092,54 L1096,52 L1100,54 L1100,59 L1096,61 L1092,59 Z" fill="url(#gcube)"/>
<path d="M1084,55 L1088,53 L1092,55 L1092,60 L1088,62 L1084,60 Z" fill="#e8d860" stroke="#a09030"/>
</g>
<!-- 尺寸快速格 -->
<path d="M1116,27 v-5 h4 v-4 h3 v9 Z" fill="#eee" stroke="#333" stroke-width="1"/>
<path d="M1119,16 h6 M1122,16 v1 M1119,30 h6 M1113,21 v4 M1128,19 v7 M1126.5,19 h3 M1126.5,26 h3" stroke="#d03030" stroke-width="1"/>
<text x="1143" y="26.5" font-size="9" font-family="Liberation Sans" fill="#222">1.00</text>
<text x="1166.5" y="23" font-size="8.5" font-family="Liberation Sans" fill="#222">1.00</text>
<text x="1167.5" y="30" font-size="7" font-weight="bold" font-family="Liberation Sans" fill="#c03030">±.05</text>
<text x="1189.5" y="23" font-size="8.5" font-family="Liberation Sans" fill="#222">1.00</text>
<text x="1190" y="28" font-size="6" font-weight="bold" font-family="Liberation Sans" fill="#c03030">+.05</text>
<text x="1190" y="32.5" font-size="6" font-weight="bold" font-family="Liberation Sans" fill="#c03030">-.02</text>
<text x="1212.5" y="23" font-size="8.5" font-family="Liberation Sans" fill="#222">1.</text>
<path d="M1213,27 h3 M1213,31 h2" stroke="#c03030" stroke-width="1"/>
<path d="M1114,60 L1129,46 M1114,60 l3.5,-0.5 l-1,-2.5 Z" stroke="#d03030" stroke-width="1" fill="#d03030"/>
<text x="1117" y="53" font-size="6" font-weight="bold" font-family="Liberation Sans" fill="#c03030" transform="rotate(-42 1119 51)">R Ø</text>
<path d="M1137,57 L1142,52.5 H1152 M1137,57 l1,-3 l2,2 Z" stroke="#d03030" stroke-width="1" fill="#d03030"/>
<text x="1141" y="51" font-size="6" font-weight="bold" font-family="Liberation Sans" fill="#c03030">R[Ø]</text>
<circle cx="1173.5" cy="53" r="4.8" fill="none" stroke="#333" stroke-width="1"/>
<path d="M1170,57 L1180,46 M1170,57 l0.5,-3 l2,1.5 Z M1177,49 l2.5,-0.8 l-0.8,2.5 Z" stroke="#d03030" stroke-width="1" fill="#d03030"/>
<circle cx="1196" cy="53" r="4.8" fill="none" stroke="#333" stroke-width="1"/>
<path d="M1188,61 L1204,45" stroke="#d03030" stroke-width="1"/>
<path d="M1213,52 L1217,48 V57 Z" fill="#3aa0a0"/>
</svg>

<svg class="a" style="left:0;top:0" width="1217" height="128" viewBox="0 0 1217 128">
<!-- menu icon -->
<path d="M11,106 h14 M13,110 h10 M11,114 h9 M13,118 h10" stroke="#555" stroke-width="1.1"/>
<path d="M11,106 h14" stroke="#3a6ad0" stroke-width="1.3"/>
<path d="M20,110 L20,119 L22,117 L24,120 L25,119.5 L23.5,116.5 L26,116 Z" fill="#fff" stroke="#444" stroke-width="0.7"/>
<!-- grey icons -->
<g stroke="#b8b8b8" stroke-width="1" fill="none">
 <path d="M396,104 V119 M391,110 h10 M391,110 V117 L400,119 M394,113 h6"/><circle cx="402" cy="108.5" r="3"/><circle cx="402" cy="114" r="3"/>
 <path d="M418,107 A3,3 0 1 1 420,112 L415,112 M415,112 l2,-2 M415,112 l2,2"/><path d="M421,113 h8 l-3,4 v3 h-2 v-3 Z" fill="#ddd"/>
 <path d="M481,105.5 A4,4 0 0 0 475,108 M475,108 l0,-3 M475,108 l3,0"/><circle cx="482" cy="114" r="3.5"/><path d="M482,109 v10 M477,114 h10"/>
 <path d="M499,107 q3,-3 6,0 q3,3 6,0 M503,110 h4 v9 h-4 Z M504,113 h3 M504,116 h3"/>
</g>
<rect x="437.5" y="104.5" width="15" height="15" fill="#fff" stroke="#d03a3a" stroke-width="1.1"/>
<circle cx="443" cy="109" r="2.6" fill="none" stroke="#333" stroke-width="0.9"/><path d="M443,105 v8 M439,109 h8" stroke="#333" stroke-width="0.8"/>
<path d="M444,113 h7 l-2.5,3 v3 h-2 v-3 Z" fill="#e8a020"/>
<rect x="523" y="106" width="14" height="12" fill="none" stroke="#333" stroke-width="1" stroke-dasharray="2,1.5"/>
<circle cx="523" cy="106" r="1.6" fill="#e03030"/><circle cx="537" cy="118" r="1.6" fill="#e03030"/>
<path d="M560,114 L567,107 L575,110 L575,116 L568,119 L561,117 Z" fill="#ccc" stroke="#555" stroke-width="0.8"/>
<path d="M563,112 L570,109" stroke="#e03030" stroke-width="1.4"/>
<path d="M585,108 L593,105 L600,108 L600,116 L592,120 L585,116 Z" fill="#8ab8ec" stroke="#6aa0e0" stroke-width="0.5"/>
<path d="M585,108 L593,105 L600,108 L592,111 Z" fill="#d8eafa"/>
<path d="M593,104 V110 L600,113" stroke="#e05050" stroke-width="0.6" fill="none"/>
<!-- highlighted icons -->
<path d="M610,104 v5 l3,-2.5 Z" fill="#2aa040"/><path d="M610,114 v5 l3,-2.5 Z" fill="#e03030"/>
<path d="M619,108 L623,112 L619,116 L615,112 Z" fill="#fff" stroke="#333" stroke-width="0.8"/>
<circle cx="619" cy="112" r="1.6" fill="#f0d020"/>
<circle cx="619" cy="107" r="1.4" fill="#fff" stroke="#333" stroke-width="0.7"/><circle cx="619" cy="117" r="1.4" fill="#fff" stroke="#333" stroke-width="0.7"/><circle cx="614" cy="112" r="1.4" fill="#fff" stroke="#333" stroke-width="0.7"/><circle cx="624" cy="112" r="1.4" fill="#fff" stroke="#333" stroke-width="0.7"/>
<path d="M636,119 L647,108" stroke="#222" stroke-width="1.1"/><circle cx="647" cy="107.5" r="1.8" fill="#e03030"/>
<path d="M662,119 L675,106" stroke="#222" stroke-width="1.1"/><circle cx="668.5" cy="112.5" r="1.8" fill="#e03030"/>
<path d="M686,105 Q691,104 691,111 Q691,119 698,118" fill="none" stroke="#222" stroke-width="1.1"/><circle cx="691" cy="111" r="1.8" fill="#e03030"/>
<path d="M712,114 L716,106 L720,117 L724,111" fill="none" stroke="#8a3ac0" stroke-width="1.2"/>
<circle cx="712" cy="114" r="1.7" fill="#e03030"/><circle cx="716" cy="106" r="1.7" fill="#e03030"/><circle cx="720" cy="117" r="1.7" fill="#e03030"/><circle cx="724" cy="111" r="1.7" fill="#e03030"/>
<path d="M735,116 Q742,106 749,116 M742,106 V120" fill="none" stroke="#222" stroke-width="1.1"/><circle cx="742" cy="110" r="1.5" fill="#e03030"/>
<circle cx="768.5" cy="112.5" r="6" fill="none" stroke="#222" stroke-width="1.2"/><circle cx="768.5" cy="112.5" r="1.6" fill="#e03030"/>
<circle cx="792" cy="112" r="5.5" fill="none" stroke="#333" stroke-width="1"/>
<g fill="#e03030"><circle cx="792" cy="106.5" r="1.5"/><circle cx="792" cy="117.5" r="1.5"/><circle cx="786.5" cy="112" r="1.5"/><circle cx="797.5" cy="112" r="1.5"/></g>
<path d="M811,112.5 h13 M818.5,105.5 v14" stroke="#222" stroke-width="1.2"/><circle cx="818.5" cy="112.5" r="1.6" fill="#e03030"/>
<path d="M836,119 L850,106" stroke="#222" stroke-width="1.1"/><circle cx="840" cy="115.5" r="1.7" fill="#e03030"/>
<path d="M860,107 Q866,103 875,107 Q869,110 872,118 Q864,116 860,107 Z" fill="#a8c8f0" stroke="#6a90d0" stroke-width="0.6"/><circle cx="868" cy="108.5" r="1.5" fill="#e03030"/>
<path d="M886,107 L894,105 L898,117 L889,119 Z M888,111 l8,-2 M889,115 l8,-2 M889,106 l3,12 M893,105.5 l3,12" fill="none" stroke="#222" stroke-width="0.9"/><circle cx="893" cy="112" r="1.3" fill="#e03030"/>
<!-- right group -->
<rect x="924" y="105" width="14" height="13" fill="#eef2fa" stroke="#4a6ad0" stroke-width="1"/><rect x="924" y="105" width="14" height="2" fill="#4a6ad0"/>
<circle cx="931" cy="113" r="3.3" fill="none" stroke="#333" stroke-width="1"/><path d="M933.5,115.5 l3,3" stroke="#333" stroke-width="1.3"/>
<circle cx="924" cy="118" r="1.3" fill="#e03030"/><circle cx="938" cy="105" r="1.3" fill="#e03030"/>
<rect x="949" y="106" width="15" height="11" fill="#e4eaf6" stroke="#8aa0c8" stroke-width="0.8"/>
<path d="M956,111 Q960,109 962,113 L963,119 L958,120 Z" fill="#f0c890" stroke="#c09060" stroke-width="0.6"/>
<path d="M975,113 A6,6 0 0 1 986,109 M988,111 A6,6 0 0 1 977,116" fill="none" stroke="#3a6ac0" stroke-width="1.8"/>
<path d="M986,106 L988,111 L983,110 Z M975,113 l2,5 l3,-4 Z" fill="#3a6ac0"/>
<rect x="1000" y="105" width="14" height="14" fill="#f4f6fc" stroke="#4a5ac0" stroke-width="1"/><rect x="1000" y="105" width="14" height="2.5" fill="#4a5ac0"/>
<path d="M1004,110 l2,2 M1010,110 l-2,2 M1004,117 l2,-2 M1010,117 l-2,-2" stroke="#e03030" stroke-width="1.4"/>
<path d="M1036,113 L1043,105 L1050,109 L1045,116 Z" fill="#b0b0b0" stroke="#555" stroke-width="0.8"/>
<path d="M1036,116 L1045,119 L1051,116 L1045,113 Z" fill="#888" stroke="#444" stroke-width="0.7"/>
<path d="M1074,107 L1082,104 L1089,107 L1089,116 L1081,120 L1074,116 Z" fill="#7aa0e8" stroke="#5a7ad0" stroke-width="0.6"/>
<path d="M1074,107 L1082,104 L1089,107 L1081,110 Z" fill="#c8daf8"/><path d="M1081,110 V120" stroke="#5a7ad0" stroke-width="0.6"/>
<path d="M1109,106 v7 l4,-3.5 Z" fill="#2aa040"/><path d="M1109,114 v6 l4,-3 Z" fill="#e03030"/>
<path d="M1114,112 L1120,106 L1126,112 L1120,118 Z" fill="#c8d8f0" stroke="#555" stroke-width="0.8"/>
</svg>

<svg class="a" style="left:0;top:0" width="232" height="852" viewBox="0 0 232 852">
<defs>
<radialGradient id="tclock" cx="0.45" cy="0.4" r="0.6"><stop offset="0" stop-color="#ffffff"/><stop offset="1" stop-color="#b8d0f0"/></radialGradient>
<linearGradient id="tfold" x1="0" y1="0" x2="0" y2="1"><stop offset="0" stop-color="#fff080"/><stop offset="1" stop-color="#d89000"/></linearGradient>
<linearGradient id="torange" x1="0" y1="0" x2="1" y2="0"><stop offset="0" stop-color="#f09020"/><stop offset="0.5" stop-color="#ffd070"/><stop offset="1" stop-color="#f09020"/></linearGradient>
<linearGradient id="tyel" x1="0" y1="0" x2="1" y2="1"><stop offset="0" stop-color="#ffe070"/><stop offset="1" stop-color="#f08a20"/></linearGradient>
</defs>
<g stroke="#9a9a9a" stroke-width="1" stroke-dasharray="1,1" fill="none">
<path d="M49.5,189 V248 M50,188.5 H59 M54,208.5 H59 M54,228.5 H60 M54,248.5 H59"/>
<path d="M68.5,257 V558"/>
<path d="M70,268.5 H79"/>
<path d="M70,288.5 H79"/>
<path d="M70,308.5 H79"/>
<path d="M70,328.5 H79"/>
<path d="M70,348.5 H79"/>
<path d="M70,368.5 H79"/>
<path d="M70,388.5 H79"/>
<path d="M70,408.5 H79"/>
<path d="M70,428.5 H79"/>
<path d="M70,448.5 H79"/>
<path d="M70,468.5 H79"/>
<path d="M70,488.5 H79"/>
<path d="M70,508.5 H79"/>
<path d="M70,528.5 H79"/>
<path d="M70,548.5 H79"/>
</g>
<rect x="45.5" y="204.5" width="8" height="8" fill="#fff" stroke="#d0d0d0" stroke-width="1"/>
<path d="M47.5,208.5 h4" stroke="#111" stroke-width="1"/>
<path d="M49.5,206.5 v4" stroke="#111" stroke-width="1"/>
<rect x="45.5" y="224.5" width="8" height="8" fill="#fff" stroke="#d0d0d0" stroke-width="1"/>
<path d="M47.5,228.5 h4" stroke="#111" stroke-width="1"/>
<path d="M49.5,226.5 v4" stroke="#111" stroke-width="1"/>
<rect x="45.5" y="244.5" width="8" height="8" fill="#fff" stroke="#d0d0d0" stroke-width="1"/>
<path d="M47.5,248.5 h4" stroke="#111" stroke-width="1"/>
<circle cx="66.7" cy="188.8" r="7" fill="url(#tclock)" stroke="#8a8a8a" stroke-width="1.4"/>
<path d="M66.7,184 V189 H70.5" fill="none" stroke="#111" stroke-width="1.2"/>
<g fill="none" stroke="#2aa040" stroke-width="1"><path d="M60,205 L66,202 L73,205 L73,212 L66,215 L60,212 Z M60,205 L66,208 L73,205 M66,208 V215 M63,203.5 L69.5,210 M69.5,203.5 L63,210"/></g>
<path d="M62,217 L72,213" stroke="#e03030" stroke-width="1.4"/>
<path d="M61.5,229 L65.5,233.5 L72.5,223.5" fill="none" stroke="#22b030" stroke-width="2.6"/>
<path d="M76.5,227 L87,223 L89,231 L78,235 Z" fill="#fff" stroke="#e03a2a" stroke-width="1.2"/>
<circle cx="82" cy="228.5" r="2.5" fill="none" stroke="#3a4ad0" stroke-width="1"/><rect x="86" y="228" width="3" height="4" fill="#222"/>
<path d="M59,246 h6 l1.5,2 h7 v8 h-14.5 Z" fill="#f0c030" stroke="#b07800" stroke-width="0.8"/>
<path d="M60,250 h15.5 l-2.5,6.5 h-14.5 Z" fill="url(#tfold)" stroke="#b07800" stroke-width="0.8"/>
<rect x="80.75" y="263.25" width="10.5" height="10.5" fill="#fff" stroke="#111" stroke-width="1.5"/>
<path d="M82.5,269.0 L85.5,272.0 L90,265.0" fill="none" stroke="#22b030" stroke-width="2.4"/>
<path d="M97,265.5 L102,262.5 L102,272.5 L97,269.5 Z M102,267.5 L108,270.5 L102,272.5" fill="none" stroke="#222" stroke-width="1"/><path d="M96.5,259.5 v5" stroke="#2a4ae0" stroke-width="1"/><path d="M104,266.5 L109,263.5" stroke="#2aa040" stroke-width="1.1"/><path d="M104,272.5 L108,275.5" stroke="#e03030" stroke-width="1.1"/>
<rect x="80.75" y="283.25" width="10.5" height="10.5" fill="#fff" stroke="#111" stroke-width="1.5"/>
<path d="M82.5,289.0 L85.5,292.0 L90,285.0" fill="none" stroke="#22b030" stroke-width="2.4"/>
<g fill="none" stroke="#111" stroke-width="1.2"><rect x="95.6" y="283.0" width="4" height="4.5"/><rect x="95.6" y="289.5" width="4" height="5"/><path d="M101.5,289.0 h6.5 v5.5 h-6.5 Z"/></g><path d="M103,287.5 L108,282.5" stroke="#e8b020" stroke-width="2.2"/><path d="M107,283.5 L108.6,281.7" stroke="#e03030" stroke-width="2"/>
<rect x="80.75" y="303.25" width="10.5" height="10.5" fill="#fff" stroke="#111" stroke-width="1.5"/>
<path d="M82.5,309.0 L85.5,312.0 L90,305.0" fill="none" stroke="#22b030" stroke-width="2.4"/>
<g fill="none" stroke="#111" stroke-width="1.2"><rect x="95.6" y="303.0" width="4" height="4.5"/><rect x="95.6" y="309.5" width="4" height="5"/><path d="M101.5,309.0 h6.5 v5.5 h-6.5 Z"/></g><path d="M103,307.5 L108,302.5" stroke="#e8b020" stroke-width="2.2"/><path d="M107,303.5 L108.6,301.7" stroke="#e03030" stroke-width="2"/>
<rect x="80.75" y="323.25" width="10.5" height="10.5" fill="#fff" stroke="#111" stroke-width="1.5"/>
<path d="M82.5,329.0 L85.5,332.0 L90,325.0" fill="none" stroke="#22b030" stroke-width="2.4"/>
<g fill="none" stroke="#111" stroke-width="1.2"><rect x="95.6" y="323.0" width="4" height="4.5"/><rect x="95.6" y="329.5" width="4" height="5"/><path d="M101.5,329.0 h6.5 v5.5 h-6.5 Z"/></g><path d="M103,327.5 L108,322.5" stroke="#e8b020" stroke-width="2.2"/><path d="M107,323.5 L108.6,321.7" stroke="#e03030" stroke-width="2"/>
<rect x="80.75" y="343.25" width="10.5" height="10.5" fill="#fff" stroke="#111" stroke-width="1.5"/>
<path d="M82.5,349.0 L85.5,352.0 L90,345.0" fill="none" stroke="#22b030" stroke-width="2.4"/>
<path d="M96,341.5 L105,344.0 L106,355.5 L97,352.5 Z" fill="#eef4ee" stroke="#222" stroke-width="1"/>
<rect x="80.75" y="363.25" width="10.5" height="10.5" fill="#fff" stroke="#111" stroke-width="1.5"/>
<path d="M82.5,369.0 L85.5,372.0 L90,365.0" fill="none" stroke="#22b030" stroke-width="2.4"/>
<g fill="none" stroke="#111" stroke-width="1.2"><rect x="95.6" y="363.0" width="4" height="4.5"/><rect x="95.6" y="369.5" width="4" height="5"/><path d="M101.5,369.0 h6.5 v5.5 h-6.5 Z"/></g><path d="M103,367.5 L108,362.5" stroke="#e8b020" stroke-width="2.2"/><path d="M107,363.5 L108.6,361.7" stroke="#e03030" stroke-width="2"/>
<rect x="80.75" y="383.25" width="10.5" height="10.5" fill="#fff" stroke="#111" stroke-width="1.5"/>
<path d="M82.5,389.0 L85.5,392.0 L90,385.0" fill="none" stroke="#22b030" stroke-width="2.4"/>
<path d="M96,381.5 L105,384.0 L106,395.5 L97,392.5 Z" fill="#eef4ee" stroke="#222" stroke-width="1"/>
<rect x="80.75" y="403.25" width="10.5" height="10.5" fill="#fff" stroke="#111" stroke-width="1.5"/>
<path d="M82.5,409.0 L85.5,412.0 L90,405.0" fill="none" stroke="#22b030" stroke-width="2.4"/>
<g fill="none" stroke="#111" stroke-width="1.2"><rect x="95.6" y="403.0" width="4" height="4.5"/><rect x="95.6" y="409.5" width="4" height="5"/><path d="M101.5,409.0 h6.5 v5.5 h-6.5 Z"/></g><path d="M103,407.5 L108,402.5" stroke="#e8b020" stroke-width="2.2"/><path d="M107,403.5 L108.6,401.7" stroke="#e03030" stroke-width="2"/>
<rect x="80.75" y="423.25" width="10.5" height="10.5" fill="#fff" stroke="#111" stroke-width="1.5"/>
<path d="M82.5,429.0 L85.5,432.0 L90,425.0" fill="none" stroke="#22b030" stroke-width="2.4"/>
<path d="M97,425.5 L104,421.5 L109,426.5 L103,433.5 Z" fill="#e8e8f0" stroke="#888" stroke-width="0.7"/><path d="M99,427.5 L106,423.5 M100,430.5 L107,426.5 M101,423.5 L105,431.5" stroke="#999" stroke-width="0.6"/><path d="M96,426.5 Q97,432.5 101,434.5 M104,421.5 L108,419.5 M105,433.5 L109,435.5" fill="none" stroke="#f06020" stroke-width="1.3"/>
<rect x="80.75" y="443.25" width="10.5" height="10.5" fill="#fff" stroke="#111" stroke-width="1.5"/>
<path d="M82.5,449.0 L85.5,452.0 L90,445.0" fill="none" stroke="#22b030" stroke-width="2.4"/>
<path d="M96,443.5 L100,441.5 L109,442.5 L109,453.5 L106,455.5 L96,454.5 Z" fill="url(#torange)" stroke="#e06820" stroke-width="0.8"/><path d="M99,442.5 V454.5 M103,442.5 V454.5 M106,442.5 V454.5" stroke="#e06820" stroke-width="0.8"/><path d="M96,454.5 L106,455.5 L109,453.5" stroke="#3a5ad0" stroke-width="1.6" fill="none"/>
<rect x="80.75" y="463.25" width="10.5" height="10.5" fill="#fff" stroke="#111" stroke-width="1.5"/>
<path d="M82.5,469.0 L85.5,472.0 L90,465.0" fill="none" stroke="#22b030" stroke-width="2.4"/>
<path d="M96,463.5 L100,461.5 L109,462.5 L109,473.5 L106,475.5 L96,474.5 Z" fill="url(#torange)" stroke="#e06820" stroke-width="0.8"/><path d="M99,462.5 V474.5 M103,462.5 V474.5 M106,462.5 V474.5" stroke="#e06820" stroke-width="0.8"/><path d="M96,474.5 L106,475.5 L109,473.5" stroke="#3a5ad0" stroke-width="1.6" fill="none"/>
<rect x="80.75" y="483.25" width="10.5" height="10.5" fill="#fff" stroke="#111" stroke-width="1.5"/>
<path d="M95,484.5 L101,481.5 L108,484.5 L108,491.5 L101,495.5 L95,492.5 Z" fill="url(#tyel)" stroke="#e05050" stroke-width="0.7"/><path d="M95,484.5 L101,481.5 L108,484.5 L101,487.5 Z" fill="#e8b0f0"/><rect x="102" y="486.5" width="6.5" height="8" fill="#fff" stroke="#222" stroke-width="0.9"/><path d="M103.5,489.5 h4 M103.5,492.0 h4" stroke="#222" stroke-width="0.8"/>
<rect x="80.75" y="503.25" width="10.5" height="10.5" fill="#fff" stroke="#111" stroke-width="1.5"/>
<path d="M82.5,509.0 L85.5,512.0 L90,505.0" fill="none" stroke="#22b030" stroke-width="2.4"/>
<path d="M95.5,501.0 h3.5" stroke="#e03030" stroke-width="1.2"/><rect x="96.5" y="506.5" width="8" height="8" fill="#30a898" stroke="#222" stroke-width="1"/><circle cx="104.5" cy="506.5" r="4.5" fill="none" stroke="#222" stroke-width="1.1"/>
<rect x="80.75" y="523.25" width="10.5" height="10.5" fill="#fff" stroke="#111" stroke-width="1.5"/>
<path d="M82.5,529.0 L85.5,532.0 L90,525.0" fill="none" stroke="#22b030" stroke-width="2.4"/>
<ellipse cx="98" cy="525.5" rx="2.8" ry="4" fill="#f0d040" stroke="#b09020" stroke-width="0.9"/><ellipse cx="99" cy="529.5" rx="2.5" ry="3.5" fill="#f0d040" stroke="#b09020" stroke-width="0.9"/><path d="M98,531.5 L107,529.5 L110,532.5 L110,535.5 L99,536.5 Z" fill="#eee" stroke="#666" stroke-width="0.8"/><rect x="103" y="526.5" width="4" height="3" fill="#e04040"/>
<rect x="80.75" y="543.25" width="10.5" height="10.5" fill="#fff" stroke="#111" stroke-width="1.5"/>
<path d="M82.5,549.0 L85.5,552.0 L90,545.0" fill="none" stroke="#22b030" stroke-width="2.4"/>
<path d="M95,545.5 L104,541.5 L109,543.5 L109,553.5 L100,556.5 L95,554.5 Z" fill="#f08a30" stroke="#3a5ad0" stroke-width="0.9"/><path d="M104,542.5 L109,543.5 L109,553.5 L104,554.5 Z" fill="#6a8ef0"/><path d="M97,549.5 L103,547.5 L103,552.5 L97,553.5 Z" fill="#ffe090"/>
<path d="M202.5,190.5 L206.5,186.5 L210.5,190.5" stroke="#444" stroke-width="1.8" fill="none"/>
<path d="M202.5,547.5 L206.5,551.5 L210.5,547.5" stroke="#444" stroke-width="1.8" fill="none"/>
<path d="M51,563 L47.5,566.5 L51,570" stroke="#444" stroke-width="1.4" fill="none"/>
<path d="M188,563 L191.5,566.5 L188,570" stroke="#444" stroke-width="1.4" fill="none"/>
<path d="M201,590.5 L206,596 L211,590.5" stroke="#2e8fd0" stroke-width="1.8" fill="none"/>
<path d="M201,621.5 L206,616 L211,621.5" stroke="#2e8fd0" stroke-width="1.8" fill="none"/>
</svg>
<svg class="a" style="left:0;top:0" width="32" height="852" viewBox="0 0 32 852">
<defs>
<linearGradient id="scube" x1="0" y1="0" x2="1" y2="1"><stop offset="0" stop-color="#fff4a0"/><stop offset="1" stop-color="#e8a800"/></linearGradient>
<linearGradient id="srain" x1="0" y1="0" x2="0" y2="1"><stop offset="0" stop-color="#f02020"/><stop offset="0.25" stop-color="#f0e020"/><stop offset="0.5" stop-color="#20e040"/><stop offset="0.75" stop-color="#20c0f0"/><stop offset="1" stop-color="#2030f0"/></linearGradient>
<radialGradient id="sinfo" cx="0.4" cy="0.35" r="0.7"><stop offset="0" stop-color="#70b0ff"/><stop offset="1" stop-color="#1050c0"/></radialGradient>
<radialGradient id="sclock" cx="0.45" cy="0.4" r="0.6"><stop offset="0" stop-color="#ffffff"/><stop offset="1" stop-color="#c0d4f0"/></radialGradient>
</defs>
<!-- gear -->
<circle cx="15" cy="141" r="4.6" fill="none" stroke="#222" stroke-width="1.4"/>
<g fill="#222"><circle cx="15" cy="135.3" r="1"/><circle cx="15" cy="146.7" r="1"/><circle cx="9.3" cy="141" r="1"/><circle cx="20.7" cy="141" r="1"/><circle cx="11" cy="137" r="0.9"/><circle cx="19" cy="137" r="0.9"/><circle cx="11" cy="145" r="0.9"/><circle cx="19" cy="145" r="0.9"/></g>
<rect x="14.3" y="140.5" width="1.4" height="1" fill="#222"/>
<!-- selected tab -->
<rect x="2.5" y="246.5" width="30" height="50" fill="#fff" stroke="#b8b8b8" stroke-width="1"/>
<rect x="31" y="247" width="2" height="49" fill="#fff"/>
<!-- assembly nav -->
<g stroke="#c89000" stroke-width="0.6"><rect x="8.5" y="179" width="7" height="7" fill="url(#scube)"/><rect x="12.5" y="184.5" width="7" height="7" fill="url(#scube)"/><rect x="19" y="195" width="7" height="6" fill="url(#scube)"/></g>
<path d="M20,191.2 H29" stroke="#222" stroke-width="1"/>
<path d="M11,192 V202 M11,197.5 H19" stroke="#2030c0" stroke-width="1.2"/>
<!-- constraints -->
<path d="M9.5,221 L17.5,225.8 L9.5,230.6 Z M25.3,221 L17.5,225.8 L25.3,230.6 Z" fill="#1830d0"/>
<path d="M17.5,219 V244" stroke="#222" stroke-width="1" stroke-dasharray="1.5,1"/>
<rect x="7.5" y="235" width="8" height="8" fill="#f8e040" stroke="#806000" stroke-width="0.7"/>
<path d="M19,243.3 L27.4,243.3 L19,232.7 Z" fill="#d01010" stroke="#700000" stroke-width="0.5"/>
<!-- part nav -->
<ellipse cx="11.6" cy="264.5" rx="4.2" ry="1.6" fill="#e0a0d8" stroke="#902080" stroke-width="0.6"/>
<path d="M7.4,264.5 V271 A4.2,1.6 0 0 0 15.8,271 V264.5" fill="#c060b0" stroke="#902080" stroke-width="0.6"/>
<path d="M19,271.7 H27.4" stroke="#222" stroke-width="1"/>
<path d="M11,275 V286.5 M11,281 H17.5" stroke="#2030c0" stroke-width="1.2"/>
<circle cx="22.1" cy="281.2" r="4" fill="none" stroke="#902080" stroke-width="1.1"/><circle cx="22.1" cy="281.2" r="1.3" fill="#902080"/>
<!-- books -->
<path d="M6.5,309 L10,306 L14,306 L10.5,309 Z" fill="#fff"/>
<rect x="6.5" y="309" width="6" height="18" fill="#f08a20" stroke="#c06000" stroke-width="0.5"/>
<rect x="12.5" y="309" width="6" height="18" fill="#40c040" stroke="#208020" stroke-width="0.5"/>
<rect x="18.5" y="309" width="6.5" height="18" fill="#4090f0" stroke="#2060c0" stroke-width="0.5"/>
<path d="M6.5,309 L10,305.5 H28.5 L25,309 Z" fill="#f4f4f4" stroke="#bbb" stroke-width="0.4"/>
<path d="M25,309 L28.5,305.5 V324 L25,327 Z" fill="#2a70d8"/>
<path d="M8,318 h3 M14,318 h3 M20,318 h3" stroke="#fff" stroke-width="0.6" opacity="0.6"/>
<!-- info -->
<path d="M17,365 A9,9 0 0 1 28,374 M18,362 A12,12 0 0 1 30.5,373" fill="none" stroke="#2050c8" stroke-width="1.8"/>
<circle cx="13.7" cy="374.2" r="7.3" fill="url(#sinfo)" stroke="#1040a0" stroke-width="0.6"/>
<rect x="12.7" y="373" width="2.2" height="5.5" fill="#fff"/><circle cx="13.8" cy="370.8" r="1.2" fill="#fff"/>
<!-- doc globe -->
<path d="M9.5,414.5 H22 L26.4,419 V435.4 H9.5 Z" fill="#fff" stroke="#3050c0" stroke-width="1"/>
<path d="M22,414.5 V419 H26.4" fill="none" stroke="#3050c0" stroke-width="0.8"/>
<circle cx="17.9" cy="427.6" r="5.2" fill="#3a90e0"/><path d="M14,425 Q17,423 19,426 Q21,429 18,431 Q15,430 14,425 Z" fill="#40a040"/>
<!-- clock -->
<circle cx="17.9" cy="477.6" r="10" fill="#909090"/><circle cx="17.9" cy="477.6" r="8.3" fill="url(#sclock)" stroke="#555" stroke-width="0.5"/>
<path d="M17.9,471 V478 H23" fill="none" stroke="#111" stroke-width="1.3"/>
<!-- rainbow wand -->
<rect x="8" y="509" width="7.8" height="20" fill="url(#srain)"/>
<path d="M17,516 L26,530" stroke="#111" stroke-width="2.2"/><circle cx="17" cy="515.5" r="2.2" fill="#fff" opacity="0.9"/>
<!-- icon 10 -->
<path d="M9,555 L13,553.5 L15.5,555 L15.5,570 L13,573 L9,570 Z" fill="#3a78e0" stroke="#2a58c0" stroke-width="0.5"/>
<path d="M9.5,558 L15,556.5 M9.5,561 L15,559.5 M9.5,564 L15,562.5 M9.5,567 L15,565.5" stroke="#9ac0f8" stroke-width="0.8"/>
<path d="M7.5,573.5 h10" stroke="#f0c020" stroke-width="1.3"/>
<path d="M16,557 L29,556 M17,561 L27,560 M18,565 L25,564" stroke="#3a68e0" stroke-width="1.1"/>
<path d="M17.5,557.7 L26,572.5" stroke="#111" stroke-width="1.8"/>
<circle cx="16.8" cy="555" r="2.3" fill="#fff"/>
<!-- tools -->
<path d="M17,595 L21,593.5 L27.5,596 L27,598.5 L22,597 L18,598 Z" fill="#9aa0b0" stroke="#555" stroke-width="0.6"/>
<path d="M21.5,597 L14,607" stroke="#777" stroke-width="1.8"/>
<path d="M8,603 Q11,602 13,605 L19,610 Q22,609 23,612 Q22,616 19,615 L13,610 Q9,610 8,606 Z" fill="#8088a8" stroke="#444" stroke-width="0.6"/>
<ellipse cx="11" cy="614" rx="2.6" ry="2" fill="#f08a10"/>
<!-- door/scene -->
<path d="M7,640.5 L14.7,637 V657.7 L7,654.5 Z" fill="#fff" stroke="#777" stroke-width="0.9"/>
<rect x="14.7" y="637" width="14" height="17" fill="#fff" stroke="#555" stroke-width="0.9"/>
<rect x="16.5" y="639" width="10.5" height="8.5" fill="#e02020"/>
<path d="M18.5,639 H25 L23.5,645 H20 Z" fill="#4a90f0"/>
<rect x="17.5" y="647" width="8.5" height="2.5" fill="#f0a040"/>
</svg>

<svg class="a" style="left:0;top:0" width="1217" height="852" viewBox="0 0 1217 852">
<defs>
 <linearGradient id="cyl" gradientUnits="userSpaceOnUse" x1="503.5" y1="297" x2="407" y2="578">
  <stop offset="0" stop-color="#ffc400"/>
  <stop offset="0.12" stop-color="#ffd226"/>
  <stop offset="0.24" stop-color="#ffb808"/>
  <stop offset="0.36" stop-color="#f29400"/>
  <stop offset="0.55" stop-color="#c27000"/>
  <stop offset="0.76" stop-color="#8a5000"/>
  <stop offset="0.92" stop-color="#6a3c00"/>
  <stop offset="1" stop-color="#704200"/>
 </linearGradient>
 <linearGradient id="win" gradientUnits="userSpaceOnUse" x1="630" y1="415" x2="600" y2="540">
  <stop offset="0" stop-color="#b86a00"/>
  <stop offset="0.5" stop-color="#ff9c00"/>
  <stop offset="1" stop-color="#ffd42a"/>
 </linearGradient>
 <linearGradient id="lugtop" gradientUnits="userSpaceOnUse" x1="630" y1="240" x2="675" y2="250">
  <stop offset="0" stop-color="#ffb000"/>
  <stop offset="0.5" stop-color="#ffc400"/>
  <stop offset="1" stop-color="#ff9c00"/>
 </linearGradient>
 <linearGradient id="hole" gradientUnits="userSpaceOnUse" x1="630" y1="255" x2="650" y2="272">
  <stop offset="0" stop-color="#e08000"/>
  <stop offset="0.6" stop-color="#ffc000"/>
  <stop offset="1" stop-color="#ffcc10"/>
 </linearGradient>
</defs>
<g stroke="#222" stroke-width="0.8" stroke-linejoin="round">
<!-- cylinder surface -->
<path d="M503.3,296.9 L724.0,373.0 L724.0,373.0 L720.3,379.1 L716.6,385.4 L713.0,392.1 L709.6,399.0 L706.2,406.1 L703.0,413.5 L699.8,421.1 L696.8,428.9 L693.9,436.8 L691.2,445.0 L688.6,453.2 L686.2,461.6 L683.9,470.1 L681.8,478.6 L679.9,487.2 L678.2,495.9 L676.6,504.5 L675.2,513.2 L674.0,521.8 L673.0,530.4 L672.2,538.9 L671.5,547.3 L671.1,555.7 L670.9,563.8 L670.8,571.9 L671.0,579.8 L671.3,587.5 L671.9,595.0 L672.6,602.2 L673.6,609.3 L674.7,616.1 L676.0,622.8 L677.4,629.3 L679.1,635.5 L680.9,641.4 L682.8,647.0 L685.0,652.2 L687.3,657.1 L689.7,661.6 L692.4,665.7 L695.1,669.5 L698.0,672.8 L701.0,675.8 L704.2,678.3 L707.5,680.5 L710.8,682.2 L714.3,683.5 L492.7,607.3 C490.8,604.8 485.4,598.8 481.0,592.5 C476.6,586.2 470.8,578.1 466.5,569.5 C462.2,560.9 458.3,550.9 455.5,541.0 C452.7,531.1 450.8,519.5 449.8,510.0 C448.8,500.5 449.1,492.4 449.3,484.0 C449.5,475.6 450.1,469.1 451.0,459.7 C451.9,450.3 453.3,438.0 454.8,427.7 C456.3,417.4 457.9,407.6 460.0,398.1 C462.1,388.6 464.4,379.8 467.4,370.7 C470.4,361.6 474.1,352.4 478.0,343.3 C481.9,334.2 486.4,323.6 490.6,315.9 C494.8,308.2 501.2,300.1 503.3,296.9 Z" fill="url(#cyl)"/>
<!-- top face -->
<path d="M503.3,296.9 L570.8,249.3 L791.7,324.6 L724.0,373.0 Z" fill="#ffc300"/>
<!-- front cap -->
<path d="M724.0,373.0 L791.7,324.6 L791.7,324.6 L795.2,325.7 L798.6,327.2 L801.9,329.1 L805.1,331.4 L808.2,334.2 L811.1,337.3 L813.9,340.8 L816.6,344.8 L819.1,349.1 L821.5,353.7 L823.6,358.7 L825.7,364.1 L827.5,369.7 L829.2,375.7 L830.7,382.0 L832.0,388.6 L833.1,395.4 L834.1,402.4 L834.8,409.7 L835.4,417.1 L835.7,424.8 L835.9,432.7 L835.9,440.7 L835.6,448.9 L835.2,457.3 L834.6,465.7 L833.8,474.2 L832.8,482.8 L831.6,491.4 L830.2,500.1 L828.6,508.7 L826.9,517.5 L825.0,526.3 L823.0,535.0 L820.8,543.6 L818.4,552.2 L815.8,560.6 L813.2,568.9 L810.3,577.1 L807.4,585.0 L804.3,592.8 L801.1,600.4 L797.8,607.7 L794.3,614.8 L790.8,621.6 L787.2,628.1 L783.5,634.4 L714.3,683.5 L714.3,683.5 L710.8,682.2 L707.5,680.5 L704.2,678.3 L701.0,675.8 L698.0,672.8 L695.1,669.5 L692.4,665.7 L689.7,661.6 L687.3,657.1 L685.0,652.2 L682.8,647.0 L680.9,641.4 L679.1,635.5 L677.4,629.3 L676.0,622.8 L674.7,616.1 L673.6,609.3 L672.6,602.2 L671.9,595.0 L671.3,587.5 L671.0,579.8 L670.8,571.9 L670.9,563.8 L671.1,555.7 L671.5,547.3 L672.2,538.9 L673.0,530.4 L674.0,521.8 L675.2,513.2 L676.6,504.5 L678.2,495.9 L679.9,487.2 L681.8,478.6 L683.9,470.1 L686.2,461.6 L688.6,453.2 L691.2,445.0 L693.9,436.8 L696.8,428.9 L699.8,421.1 L703.0,413.5 L706.2,406.1 L709.6,399.0 L713.0,392.1 L716.6,385.4 L720.3,379.1 L724.0,373.0 Z" fill="#d07c00"/>
<path d="M726.1,375.2 L790.5,327.8 L794.6,327.4 L797.9,328.8 L801.0,330.6 L804.0,332.9 L807.0,335.5 L809.8,338.5 L812.5,341.9 L815.1,345.7 L817.5,349.9 L819.8,354.5 L822.0,359.4 L824.0,364.7 L825.8,370.3 L827.4,376.2 L828.9,382.4 L830.2,388.9 L831.3,395.6 L832.3,402.6 L833.0,409.8 L833.6,417.2 L833.9,424.9 L834.1,432.7 L834.1,440.7 L833.8,448.9 L833.4,457.1 L832.8,465.5 L832.0,474.0 L831.0,482.5 L829.8,491.1 L828.4,499.8 L826.9,508.4 L825.1,517.1 L823.3,525.8 L821.2,534.5 L819.0,543.1 L816.7,551.7 L814.1,560.1 L811.5,568.3 L808.6,576.4 L805.7,584.4 L802.6,592.1 L799.4,599.6 L796.1,606.9 L792.7,614.0 L789.2,620.7 L785.6,627.2 L781.1,632.4 L715.0,679.3 L711.4,680.5 L708.2,678.8 L705.1,676.8 L702.1,674.4 L699.2,671.5 L696.5,668.3 L693.8,664.6 L691.3,660.6 L688.9,656.2 L686.6,651.4 L684.5,646.3 L682.5,640.8 L680.8,635.0 L679.2,628.8 L677.7,622.4 L676.5,615.7 L675.4,609.0 L674.4,602.0 L673.7,594.8 L673.1,587.4 L672.8,579.7 L672.6,571.9 L672.7,563.9 L672.9,555.7 L673.3,547.4 L674.0,539.1 L674.8,530.6 L675.8,522.0 L677.0,513.4 L678.4,504.8 L679.9,496.2 L681.7,487.6 L683.6,479.0 L685.7,470.5 L687.9,462.1 L690.4,453.7 L692.9,445.5 L695.6,437.4 L698.5,429.5 L701.5,421.8 L704.6,414.2 L707.8,406.9 L711.2,399.8 L714.6,392.9 L718.2,386.3 L721.8,380.0 Z" fill="none" stroke-width="0.6"/>
<!-- door -->
<path d="M721,675 L725.8,526.7 M780.3,489.4 L775,638.7" fill="none" stroke="#262a38" stroke-width="1.2"/>
<path d="M725.8,527 L780.3,489.7" fill="none" stroke="#5a4a30" stroke-width="1.6"/>
<path d="M725.8,527 L780.3,489.7" fill="none" stroke="#c09040" stroke-width="0.5"/>
<!-- window -->
<path d="M517.7,378.5 L650.2,423.9 Q644,485 626.1,546.4 L493.5,502 Q489.8,439.2 517.7,378.5 Z" fill="#cd7a00"/>
<path d="M613.9,411.2 L650.2,423.9 Q644,485 626.1,546.4 L579.7,528.5 Q609.8,460 613.9,411.2 Z" fill="url(#win)"/>
<path d="M494,498 L626,542" fill="none" stroke="#ffd84a" stroke-width="2"/>
<path d="M521,379.5 Q494,440 497,500" fill="none" stroke-width="0.6"/>
<path d="M496,499 L626.5,543" fill="none" stroke-width="0.6"/>
<!-- lug -->
<path d="M597,303.7 L624.5,248.8 L631,243.5 L648,231 C652,228 666,227 676,248.8 L698.5,318.5 L678.7,331.9 Z" fill="url(#lugtop)"/>
<path d="M654,257.3 L661,258.7 L676,248.8 L698.5,318.5 L678.7,331.9 Z" fill="#ff9a00"/>
<path d="M597,303.7 L624.5,248.8 C628,241 645,238 653.4,255.8 L678.7,331.9 Z" fill="#a56300"/>
<ellipse cx="640" cy="263.6" rx="11.3" ry="12.7" transform="rotate(-25 640 263.6)" fill="url(#hole)"/>
</g>
<!-- axes -->
<path d="M650.4,206 Q654.5,229 650.4,252 Q646.3,229 650.4,206 Z" fill="#2a8a2a"/>
<path d="M650.4,238 L652,238 L650.4,252 L648.8,238 Z" fill="#8cc48c"/>
<path d="M647,258.7 Q635,272.5 618.2,277.7 Q630,263.8 647,258.7 Z" fill="#1f4fff"/>
<path d="M653.4,258 Q674.2,270 697,272.7 Q676.2,260.7 653.4,258 Z" fill="#e03a3a"/>
<path d="M653.4,258 Q662,262.8 668.5,264.5 Q662.5,260.5 653.4,258 Z" fill="#f2b0b0"/>
<text x="640.7" y="205.5" font-size="11.5" fill="#3a9a3a" text-anchor="middle" font-family="Liberation Sans">YC</text>
<text x="627.3" y="290.5" font-size="11.5" fill="#3552ff" text-anchor="middle" font-family="Liberation Sans">ZC</text>
<text x="688.6" y="286.5" font-size="11.5" fill="#d83c3c" text-anchor="middle" font-family="Liberation Sans">XC</text>
<path d="M291.5,849 L294.5,853 M298,849 L295,853" stroke="#2a9a2a" stroke-width="1.6"/>
</svg>
</body></html>
